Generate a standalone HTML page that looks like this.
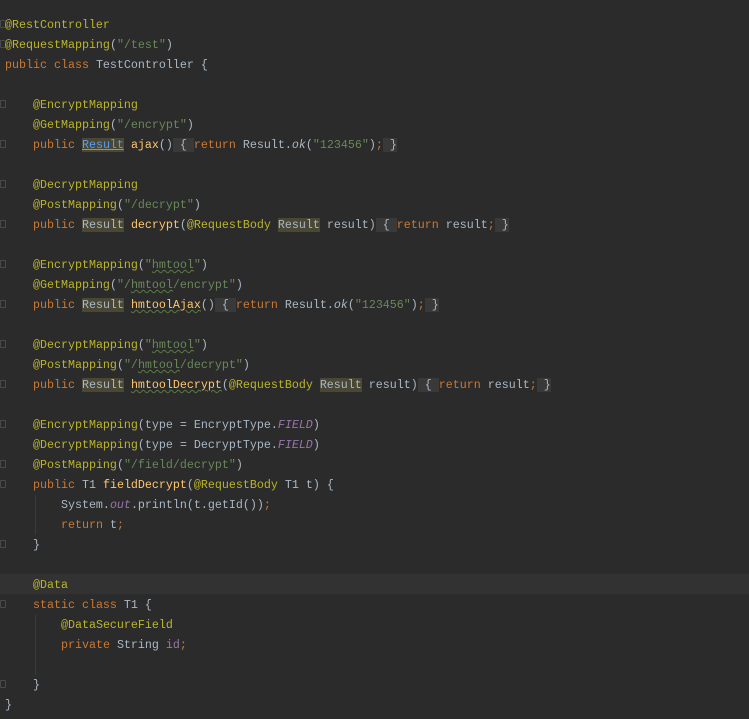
<!DOCTYPE html>
<html><head><meta charset="utf-8"><style>
html,body{margin:0;padding:0;background:#2b2b2b;width:749px;height:719px;overflow:hidden}
.cur{position:absolute;left:0;top:574px;width:749px;height:20px;background:#323232}
pre{position:absolute;left:5px;top:15px;margin:0;font-family:"Liberation Mono",monospace;font-size:11.67px;line-height:20px;color:#a9b7c6;white-space:pre}
.k{color:#cc7832}.a{color:#bbb529}.s{color:#6a8759}.m{color:#ffc66d}.i{color:#9876aa;font-style:italic}.f{color:#9876aa}.it{font-style:italic}
.h{background:#4a4834}.fb{background:#393939}
.l{color:#589df6;text-decoration:underline;background:#4a4834}
.w{text-decoration:underline wavy #5a7a40;text-decoration-thickness:1px}
.g{position:absolute;left:0;width:6px;height:8px;border:1px solid #4a4a4a;border-radius:1px;box-sizing:border-box}
.ig{position:absolute;width:1px;background:#3a3a3a}
</style></head><body>
<div class="cur"></div>
<div class="g" style="top:20px"></div><div class="g" style="top:40px"></div>
<div class="g" style="top:100px"></div><div class="g" style="top:140px"></div>
<div class="g" style="top:180px"></div><div class="g" style="top:220px"></div>
<div class="g" style="top:260px"></div><div class="g" style="top:300px"></div>
<div class="g" style="top:340px"></div><div class="g" style="top:380px"></div>
<div class="g" style="top:420px"></div><div class="g" style="top:460px"></div><div class="g" style="top:480px"></div>
<div class="g" style="top:540px"></div><div class="g" style="top:600px"></div><div class="g" style="top:680px"></div>
<div class="ig" style="left:35px;top:495px;height:40px"></div>
<div class="ig" style="left:35px;top:615px;height:60px"></div>
<pre><span class="a">@RestController</span>
<span class="a">@RequestMapping</span>(<span class="s">"/test"</span>)
<span class="k">public class </span>TestController {

    <span class="a">@EncryptMapping</span>
    <span class="a">@GetMapping</span>(<span class="s">"/encrypt"</span>)
    <span class="k">public </span><span class="l">Result</span> <span class="m">ajax</span>()<span class="fb"> { </span><span class="k">return </span>Result.<span class="it">ok</span>(<span class="s">"123456"</span>)<span class="k">;</span><span class="fb"> }</span>

    <span class="a">@DecryptMapping</span>
    <span class="a">@PostMapping</span>(<span class="s">"/decrypt"</span>)
    <span class="k">public </span><span class="h">Result</span> <span class="m">decrypt</span>(<span class="a">@RequestBody </span><span class="h">Result</span> result)<span class="fb"> { </span><span class="k">return </span>result<span class="k">;</span><span class="fb"> }</span>

    <span class="a">@EncryptMapping</span>(<span class="s">"<span class="w">hmtool</span>"</span>)
    <span class="a">@GetMapping</span>(<span class="s">"/<span class="w">hmtool</span>/encrypt"</span>)
    <span class="k">public </span><span class="h">Result</span> <span class="m w">hmtoolAjax</span>()<span class="fb"> { </span><span class="k">return </span>Result.<span class="it">ok</span>(<span class="s">"123456"</span>)<span class="k">;</span><span class="fb"> }</span>

    <span class="a">@DecryptMapping</span>(<span class="s">"<span class="w">hmtool</span>"</span>)
    <span class="a">@PostMapping</span>(<span class="s">"/<span class="w">hmtool</span>/decrypt"</span>)
    <span class="k">public </span><span class="h">Result</span> <span class="m w">hmtoolDecrypt</span>(<span class="a">@RequestBody </span><span class="h">Result</span> result)<span class="fb"> { </span><span class="k">return </span>result<span class="k">;</span><span class="fb"> }</span>

    <span class="a">@EncryptMapping</span>(type = EncryptType.<span class="i">FIELD</span>)
    <span class="a">@DecryptMapping</span>(type = DecryptType.<span class="i">FIELD</span>)
    <span class="a">@PostMapping</span>(<span class="s">"/field/decrypt"</span>)
    <span class="k">public </span>T1 <span class="m">fieldDecrypt</span>(<span class="a">@RequestBody </span>T1 t) {
        System.<span class="i">out</span>.println(t.getId())<span class="k">;</span>
        <span class="k">return </span>t<span class="k">;</span>
    }

    <span class="a">@Data</span>
    <span class="k">static class </span>T1 {
        <span class="a">@DataSecureField</span>
        <span class="k">private </span>String <span class="f">id</span><span class="k">;</span>

    }
}</pre>
</body></html>
